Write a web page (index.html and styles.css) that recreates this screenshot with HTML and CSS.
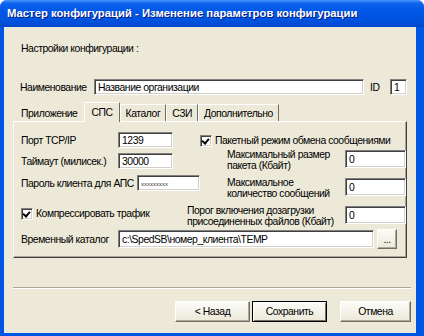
FILE: index.html
```html
<!DOCTYPE html>
<html lang="ru">
  <head>
    <meta charset="UTF-8" />
    <title>Мастер конфигураций</title>
    <link rel="stylesheet" href="styles.css">
  </head>
  <body>
    <div class="window">
      <!-- Title bar -->
      <div class="titlebar">
        <span class="title">Мастер конфигураций - Изменение параметров конфигурации</span>
      </div>

      <div class="client">
        <p class="section-label">Настройки конфигурации :</p>

        <div class="name-row">
          <span class="name-label">Наименование</span>
          <div class="field name-field">Название организации</div>
          <span class="id-label">ID</span>
          <div class="field id-field">1</div>
        </div>

        <!-- Tabs -->
        <div class="tabs">
          <div class="tab">Приложение</div>
          <div class="tab active">СПС</div>
          <div class="tab">Каталог</div>
          <div class="tab">СЗИ</div>
          <div class="tab">Дополнительно</div>
        </div>

        <div class="panel">
          <div class="panel-top">
            <div class="col-left">
              <div class="row row-port">
                <span class="lbl">Порт TCP/IP</span>
                <div class="field small-field">1239</div>
              </div>
              <div class="row row-timeout">
                <span class="lbl">Таймаут (милисек.)</span>
                <div class="field small-field">30000</div>
              </div>
              <div class="row row-pass">
                <span class="lbl lbl-pass">Пароль клиента для АПС</span>
                <div class="field pass-field">xxxxxxxxx</div>
              </div>
              <div class="check-row row-compress">
                <span class="checkbox checked"></span>
                <span>Компрессировать трафик</span>
              </div>
            </div>

            <div class="col-right">
              <div class="check-row row-packet">
                <span class="checkbox checked"></span>
                <span>Пакетный режим обмена сообщениями</span>
              </div>
              <div class="row sub-row row-size">
                <span class="lbl2">Максимальный размер<br>пакета (Кбайт)</span>
                <div class="field num-field">0</div>
              </div>
              <div class="row sub-row row-count">
                <span class="lbl2">Максимальное<br>количество сообщений</span>
                <div class="field num-field">0</div>
              </div>
              <div class="row row-limit">
                <span class="lbl2">Порог включения дозагрузки<br>присоединенных файлов (Кбайт)</span>
                <div class="field num-field">0</div>
              </div>
            </div>
          </div>

          <div class="row row-temp">
            <span class="lbl">Временный каталог</span>
            <div class="field temp-field">c:\SpedSB\номер_клиента\TEMP</div>
            <div class="btn browse">...</div>
          </div>
        </div>

        <div class="separator"></div>

        <div class="buttons">
          <div class="btn">&lt; Назад</div>
          <div class="btn default">Сохранить</div>
          <div class="btn cancel">Отмена</div>
        </div>
      </div>
    </div>
  </body>
</html>
```

FILE: styles.css
```css
* {
  margin: 0;
  padding: 0;
  box-sizing: border-box;
}

body {
  font-family: "Liberation Sans", Arial, sans-serif;
  font-size: 10.4px;
  letter-spacing: -0.45px;
  line-height: 13px;
  color: #000;
  background: #fff;
}

.window {
  width: 424px;
  height: 336px;
  display: flex;
  flex-direction: column;
  background: #0055e5;
  border-radius: 7px 7px 0 0;
  overflow: hidden;
}

.titlebar {
  height: 27px;
  flex-shrink: 0;
  display: flex;
  align-items: center;
  padding-left: 7px;
  background: linear-gradient(to bottom, #4b97ff 0%, #0f64ee 12%, #0058e6 40%, #0052dd 80%, #0046c8 100%);
}

.title {
  color: #fff;
  font-weight: bold;
  font-size: 11.3px;
  letter-spacing: 0;
  text-shadow: 1px 1px 0 #0a1883;
  white-space: nowrap;
}

.client {
  flex: 1;
  margin: 0 8px 3px 4px;
  background: #ece9d8;
  display: flex;
  flex-direction: column;
}

.section-label {
  margin: 15px 0 0 17px;
}

.name-row {
  display: flex;
  align-items: center;
  margin: 24px 0 0 16px;
}

.name-label {
  width: 74px;
  white-space: nowrap;
}

.field {
  height: 16px;
  background: #fff;
  border: 1px solid;
  border-color: #808080 #fff #fff #808080;
  box-shadow: inset 1px 1px 0 #404040, inset -1px -1px 0 #d4d0c8;
  padding: 1px 0 0 3px;
  white-space: nowrap;
  overflow: hidden;
}

.name-field {
  width: 270px;
}

.id-label {
  margin-left: 6px;
  width: 20px;
}

.id-field {
  width: 17px;
}

/* Tabs */
.tabs {
  display: flex;
  align-items: flex-end;
  margin: 7px 0 0 9px;
  height: 19px;
}

.tab {
  height: 17px;
  padding: 2px 5px 0;
  border-left: 1px solid #fff;
  border-top: 1px solid #fff;
  border-right: 1px solid #716f64;
  white-space: nowrap;
}

.tab:first-child {
  border-color: transparent;
  padding: 2px 6px 0 7px;
}

.tab.active {
  height: 20px;
  padding: 3px 6px 0;
  margin-bottom: -1px;
  background: #ece9d8;
  position: relative;
}

.panel {
  margin: 0 0 0 9px;
  width: 394px;
  height: 137px;
  border: 1px solid;
  border-color: #fff #404040 #404040 #fff;
  box-shadow: inset -1px -1px 0 #aca899;
  padding: 10px 0 0 7px;
}

.panel-top {
  display: flex;
}

.row {
  display: flex;
  align-items: center;
}

.col-left {
  width: 179px;
  display: flex;
  flex-direction: column;
}

.lbl {
  width: 97px;
  flex-shrink: 0;
  white-space: nowrap;
}

.lbl-pass {
  width: 116px;
}

.small-field {
  width: 55px;
}

.pass-field {
  width: 67px;
  font-size: 6px;
  letter-spacing: 0;
  padding-top: 2px;
  color: #333;
}

.row-timeout {
  margin-top: 5px;
}

.row-pass {
  margin-top: 6px;
}

.check-row {
  display: flex;
  align-items: center;
  white-space: nowrap;
}

.row-compress {
  margin-top: 16px;
}

.checkbox {
  width: 12px;
  height: 12px;
  flex-shrink: 0;
  margin-right: 3px;
  background: #fff;
  border: 1px solid;
  border-color: #808080 #fff #fff #808080;
  box-shadow: inset 1px 1px 0 #404040, inset -1px -1px 0 #d4d0c8;
  position: relative;
}

.checkbox.checked::after {
  content: "";
  position: absolute;
  left: 2px;
  top: 1px;
  width: 3px;
  height: 5px;
  border: solid #000;
  border-width: 0 2px 2px 0;
  transform: rotate(40deg);
}

.col-right {
  flex: 1;
  display: flex;
  flex-direction: column;
}

.row-packet {
  margin-top: 2px;
}

.lbl2 {
  flex: 1;
  line-height: 11px;
  padding-top: 2px;
  white-space: nowrap;
}

.sub-row {
  padding-left: 27px;
}

.num-field {
  width: 61px;
  height: 18px;
  padding-top: 2px;
}

.row-size {
  margin-top: 0;
}

.row-count {
  margin-top: 4px;
}

.row-limit {
  margin-top: 4px;
  margin-left: -13px;
}

.row-temp {
  margin-top: 2px;
}

.temp-field {
  width: 256px;
  height: 18px;
  padding-top: 2px;
}

.btn {
  height: 21px;
  display: flex;
  align-items: center;
  justify-content: center;
  background: linear-gradient(to bottom, #fbfbf8, #ece9d8);
  border: 1px solid;
  border-color: #fff #716f64 #716f64 #fff;
  box-shadow: inset -1px -1px 0 #aca899;
}

.browse {
  width: 20px;
  height: 20px;
  margin-left: 3px;
  font-size: 10px;
}

.separator {
  margin: 29px 0 0 9px;
  width: 398px;
  height: 2px;
  border-top: 1px solid #aca899;
  border-bottom: 1px solid #fff;
}

.buttons {
  display: flex;
  margin: 12px 0 0 171px;
}

.buttons .btn {
  width: 75px;
}

.buttons .default {
  margin-left: 2px;
  border: 1px solid #000;
  box-shadow: inset 1px 1px 0 #fff, inset -1px -1px 0 #716f64;
}

.buttons .cancel {
  margin-left: 13px;
  width: 71px;
}
```
